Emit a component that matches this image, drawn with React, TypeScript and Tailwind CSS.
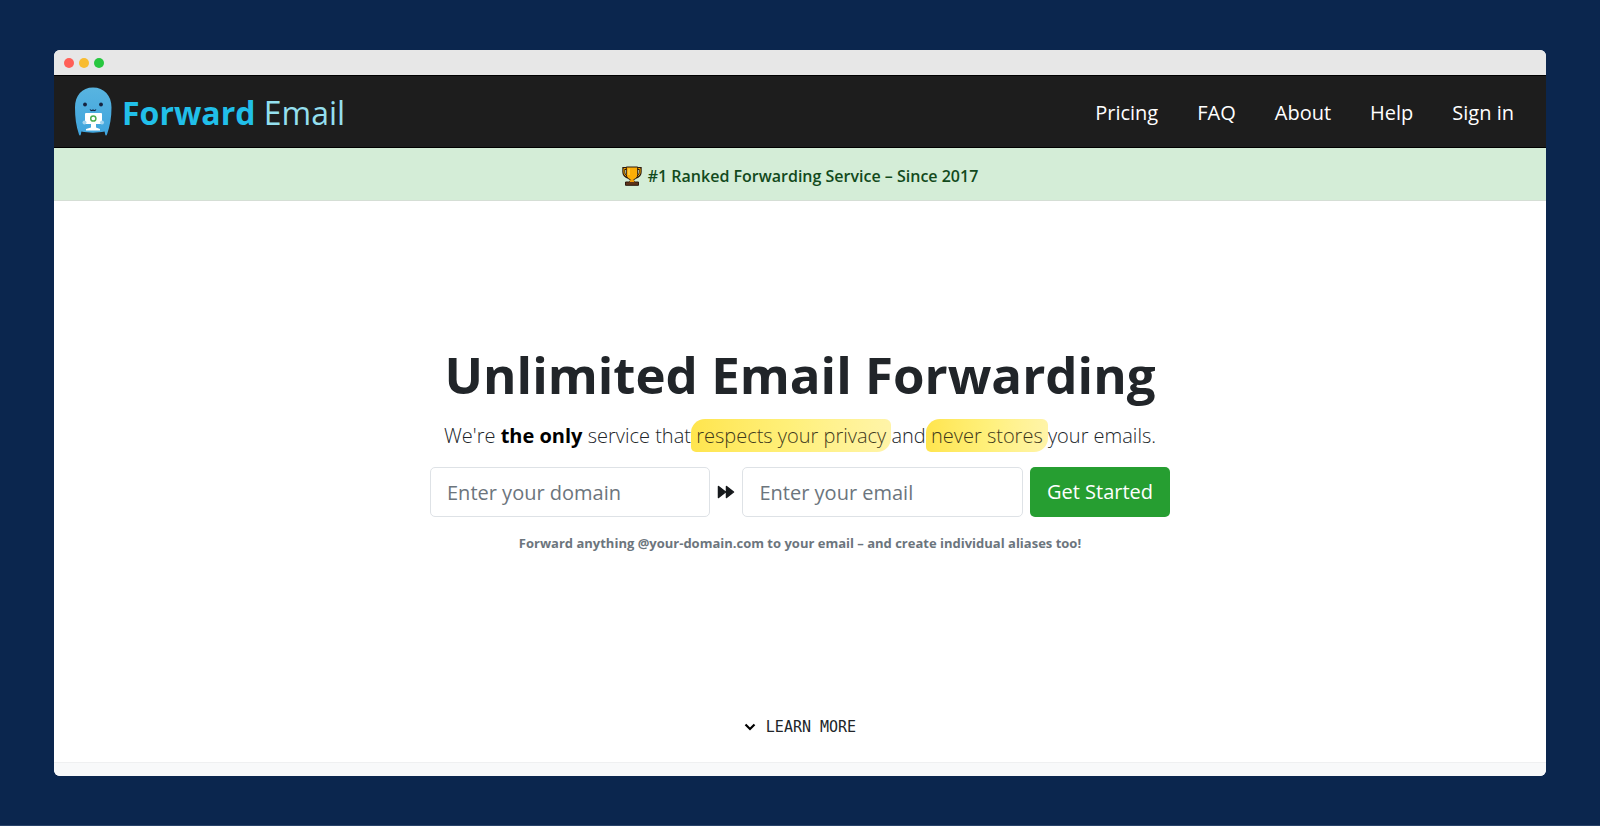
import React, { useState } from 'react'

const navLinks = ['Pricing', 'FAQ', 'About', 'Help', 'Sign in']

const MascotLogo: React.FC = () => (
  <svg viewBox="0 0 38 50" className="h-[50px] w-[38px] shrink-0" aria-hidden="true">
    <defs>
      <linearGradient id="mascot-body" x1="0" y1="0" x2="0" y2="1">
        <stop offset="0" stopColor="#58b4e0" />
        <stop offset="1" stopColor="#3fa4dd" />
      </linearGradient>
    </defs>
    <path
      d="M19 .5C8 .5 1 8.500 1 20.500c0 10 1 18 4 27 .4 1.200 1.600 1.200 1.800 0l.6-3c7 1.500 16 1.500 23.200 0l.6 3c.2 1.200 1.400 1.200 1.800 0 3-9 4.500-17 4.500-27C37.500 8.500 30 .5 19 .5z"
      fill="url(#mascot-body)"
    />
    <circle cx="11" cy="17.500" r="1.900" fill="#16233f" />
    <circle cx="27" cy="17.500" r="1.900" fill="#16233f" />
    <path d="M16 22.500q1.500 2 3 .3q1.500 1.700 3-.3" fill="none" stroke="#16233f" strokeWidth="1.100" />
    <rect x="11" y="26" width="17" height="11" rx="1" fill="#fff" />
    <path d="M17 37h5v3.500l4 1.500v1.500H12v-1.500l5-1.500z" fill="#fff" />
    <circle cx="10.500" cy="35.500" r="2" fill="#a5d5ef" />
    <circle cx="28" cy="35.500" r="2" fill="#a5d5ef" />
    <circle cx="19.300" cy="31.500" r="2.600" fill="none" stroke="#4cae4f" strokeWidth="1.500" />
  </svg>
)

const TrophyIcon: React.FC = () => (
  <svg viewBox="0 0 20 20" className="h-5 w-5 shrink-0" aria-hidden="true">
    <path d="M5 2.500H1.700V6c0 3 2 4.500 4.500 5.500M15 2.500h3.300V6c0 3-2 4.500-4.500 5.500" fill="none" stroke="#2b1a10" strokeWidth="2.800" />
    <path d="M5 2.500H1.900V6c0 2.800 1.700 4 4.200 5M15 2.500h3.100V6c0 2.800-1.700 4-4.200 5" fill="none" stroke="#f5a800" strokeWidth="1" />
    <path d="M4.300 1h11.400v7.500c0 3-2 4.500-4.200 5.200v2.300h-3v-2.300c-2.200-.7-4.200-2.200-4.200-5.200z" fill="#fcae08" stroke="#2b1a10" strokeWidth="1" />
    <path d="M3.500 16h3L8 15h4l1.500 1h3v3.300h-13z" fill="#5e3318" stroke="#2b1a10" />
    <path d="M8.500 13.500h3l1 2.500h-5z" fill="#f09c0a" />
    <path d="M7 2.500v6.500" stroke="#ffd45c" strokeWidth="1.400" />
  </svg>
)

const ForwardIcon: React.FC = () => (
  <svg viewBox="0 0 18 14" className="h-[14px] w-[18px] shrink-0" aria-hidden="true">
    <path
      d="M1.500 1.500 8.500 7l-7 5.500zM9.500 1.500l7 5.500-7 5.500z"
      fill="#16191c"
      stroke="#16191c"
      strokeWidth="1.500"
      strokeLinejoin="round"
    />
  </svg>
)

const Highlight: React.FC<{ children: React.ReactNode }> = ({ children }) => (
  <mark className="-mx-[5px] inline-block rounded-[14px_6px_14px_5px] bg-linear-to-r from-[#ffe54d] via-[#fff07a] to-[#fff4a8] px-[5px] text-[#3f3a1c]">
    {children}
  </mark>
)

const TitleBar: React.FC = () => (
  <div className="flex h-[25px] items-center gap-[5px] bg-[#e7e7e7] px-[10px]">
    <span className="h-[10px] w-[10px] rounded-full bg-[#ff5f57]" />
    <span className="h-[10px] w-[10px] rounded-full bg-[#f8bc31]" />
    <span className="h-[10px] w-[10px] rounded-full bg-[#27c73f]" />
  </div>
)

const Header: React.FC = () => (
  <header className="flex h-[73px] items-center justify-between border-y border-black bg-[#1d1d1d] pl-5 pr-8">
    <a href="#home" className="flex items-center gap-[10px] text-[32px] leading-none">
      <MascotLogo />
      <span className="pt-0.5">
        <span className="font-bold text-[#21bfe9]">Forward</span>{' '}
        <span className="text-[#94dfee]">Email</span>
      </span>
    </a>
    <nav className="flex gap-[39px] pt-0.5 text-xl text-white">
      {navLinks.map((link) => (
        <a key={link} href="#nav">
          {link}
        </a>
      ))}
    </nav>
  </header>
)

const Hero: React.FC = () => {
  const [domain, setDomain] = useState('')
  const [email, setEmail] = useState('')

  const inputClass =
    'h-[50px] min-w-0 flex-1 rounded-[5px] border border-[#dee2e6] bg-white px-4 text-xl text-[#212529] placeholder:text-[#6c757d]'

  return (
    <section className="flex flex-1 flex-col items-center justify-center pb-[22px] text-center">
      <h1 className="text-[51px] font-bold leading-[66px] text-[#212529]">Unlimited Email Forwarding</h1>
      <p className="mt-3 text-xl font-light leading-[33px] text-[#212529]">
        We're <strong className="font-bold text-black">the only</strong> service that{' '}
        <Highlight>respects your privacy</Highlight> and <Highlight>never stores</Highlight> your emails.
      </p>
      <form className="mt-[15px] flex w-full max-w-[740px] items-center gap-[7px]" onSubmit={(e) => e.preventDefault()}>
        <input
          type="text"
          aria-label="Domain"
          placeholder="Enter your domain"
          value={domain}
          onChange={(e) => setDomain(e.target.value)}
          className={inputClass}
        />
        <ForwardIcon />
        <input
          type="email"
          aria-label="Email"
          placeholder="Enter your email"
          value={email}
          onChange={(e) => setEmail(e.target.value)}
          className={inputClass}
        />
        <button type="submit" className="h-[50px] rounded-[5px] bg-[#269e31] px-[17px] text-xl text-white">
          Get Started
        </button>
      </form>
      <p className="mt-4 text-[13px] font-bold leading-5 text-[#6c757d]">
        Forward anything @your-domain.com to your email – and create individual aliases too!
      </p>
    </section>
  )
}

const App: React.FC = () => (
  <div className="flex min-h-screen flex-col border-b border-[#284269] bg-[#0b264e] px-[54px] pb-[49px] pt-[50px] font-['Open_Sans',sans-serif]">
    <div className="flex flex-1 flex-col overflow-hidden rounded-[6px] bg-white">
      <TitleBar />
      <Header />
      <div className="flex h-[53px] items-center justify-center gap-[6px] border-b border-[#d5ded5] bg-[#d4edd7] pt-[3px] text-base font-semibold text-[#124a1c]">
        <TrophyIcon />
        #1 Ranked Forwarding Service – Since 2017
      </div>
      <main className="flex flex-1 flex-col">
        <Hero />
        <a
          href="#learn-more"
          className="mb-6 flex items-center justify-center gap-[10px] font-['DejaVu_Sans_Mono',monospace] text-[15px] text-[#212529]"
        >
          <svg viewBox="0 0 12 8" className="h-2 w-3" fill="none" stroke="#000" strokeWidth="2.200" aria-hidden="true">
            <path d="m1.500 1.500 4.500 4.500 4.500-4.500" />
          </svg>
          LEARN MORE
        </a>
      </main>
      <div className="h-[14px] border-t border-[#eff0f1] bg-[#f8f9fa]" />
    </div>
  </div>
)

export default App
